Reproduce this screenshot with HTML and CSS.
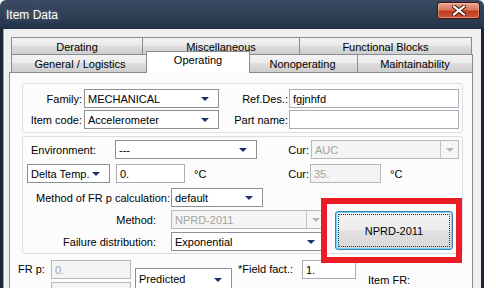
FILE: index.html
```html
<!DOCTYPE html>
<html>
<head>
<meta charset="utf-8">
<link rel="stylesheet" href="styles.css">
</head>
<body>
<div class="window">
  <div class="titlebar">
    <span class="title">Item Data</span>
    <div class="close">
      <svg width="14" height="11" viewBox="0 0 14 11"><path d="M2 1.5 L12 9.5 M12 1.5 L2 9.5" stroke="#3a0f08" stroke-width="4" stroke-linecap="square"/><path d="M2 1.5 L12 9.5 M12 1.5 L2 9.5" stroke="#fff" stroke-width="2.2" stroke-linecap="square"/></svg>
    </div>
  </div>
  <div class="client">
    <div class="tabs">
      <div class="tabrow back">
        <div class="tab t-der">Derating</div>
        <div class="tab t-misc">Miscellaneous</div>
        <div class="tab t-fb">Functional Blocks</div>
      </div>
      <div class="tabrow front">
        <div class="tab t-gen">General / Logistics</div>
        <div class="tab t-op sel">Operating</div>
        <div class="tab t-non">Nonoperating</div>
        <div class="tab t-mt">Maintainability</div>
      </div>
    </div>
    <div class="pane">
      <div class="group g1">
        <div class="row">
          <span class="lbl l-fam">Family:</span>
          <div class="combo c-fam"><span>MECHANICAL</span><i class="arr"></i></div>
          <span class="lbl l-ref">Ref.Des.:</span>
          <div class="field f-ref">fgjnhfd</div>
        </div>
        <div class="row">
          <span class="lbl l-fam">Item code:</span>
          <div class="combo c-fam"><span>Accelerometer</span><i class="arr"></i></div>
          <span class="lbl l-ref">Part name:</span>
          <div class="field f-ref"></div>
        </div>
      </div>
      <div class="group g2">
        <div class="row">
          <span class="lbl l-env">Environment:</span>
          <div class="combo c-env"><span>---</span><i class="arr"></i></div>
          <span class="lbl l-cur">Cur:</span>
          <div class="combo dis c-cur"><span>AUC</span><b class="dbtn"><i class="darr"></i></b></div>
        </div>
        <div class="row r2">
          <div class="combo c-dt"><span>Delta Temp.</span><i class="arr"></i></div>
          <div class="field f-dt">0.</div>
          <span class="unit u1">°C</span>
          <span class="lbl l-cur2">Cur:</span>
          <div class="field dis f-cur">35.</div>
          <span class="unit u2">°C</span>
        </div>
        <div class="row r3">
          <span class="lbl l-meth">Method of FR p calculation:</span>
          <div class="combo c-def"><span>default</span><i class="arr"></i></div>
        </div>
        <div class="lower">
          <div class="lcol">
            <div class="row">
              <span class="lbl l-m2">Method:</span>
              <div class="combo dis c-m"><span>NPRD-2011</span><b class="dbtn"><i class="darr"></i></b></div>
            </div>
            <div class="row">
              <span class="lbl l-m2">Failure distribution:</span>
              <div class="combo c-m"><span>Exponential</span><i class="arr"></i></div>
            </div>
          </div>
          <div class="btn"><span class="focus">NPRD-2011</span></div>
        </div>
      </div>
      <div class="bottom">
        <span class="lbl l-frp">FR p:</span>
        <div class="stack">
          <div class="field dis f-frp">0.</div>
          <div class="field dis f-frp"></div>
        </div>
        <div class="combo c-pred"><span>Predicted</span><i class="arr"></i></div>
        <span class="lbl l-ff">*Field fact.:</span>
        <div class="field f-ff">1.</div>
        <span class="lbl l-ifr">Item FR:</span>
      </div>
    </div>
  </div>
</div>
<div class="annot"></div>
</body>
</html>
```
FILE: styles.css
```css
* { box-sizing: border-box; }
html, body { margin: 0; padding: 0; }
body {
  width: 496px; height: 288px; overflow: hidden; position: relative;
  background: #fff;
  font-family: "Liberation Sans", Arial, sans-serif; font-size: 11px; color: #000;
}
.window {
  width: 484px; height: 288px;
  display: flex; flex-direction: column;
  background: linear-gradient(to bottom, #3a4b63 0, #24344a 28px, #1b2535 29px, #1b2535 100%);
  border-radius: 6px 6px 0 0;
  padding: 0 3px;
}
.titlebar {
  height: 29px; flex: none;
  display: flex; justify-content: space-between; align-items: flex-start;
  padding-left: 3px;
}
.title {
  color: #fff; font-size: 12px; margin-top: 8px;
  text-shadow: 0 0 5px rgba(255,255,255,0.35);
}
.close {
  width: 43px; height: 17px; margin-top: 2px; margin-right: 1px;
  border: 1px solid #45140c; border-radius: 3px;
  background: linear-gradient(to bottom, #e9a590 0, #d9765c 45%, #c13d22 55%, #c8553a 100%);
  box-shadow: inset 0 0 0 1px rgba(255,210,190,0.45);
  display: flex; align-items: center; justify-content: center;
}
.client {
  flex: 1; min-height: 0;
  background: #f0f0f0;
  border-left: 1px solid #9aa3ad;
  padding: 8px 8px 0 5px;
  display: flex; flex-direction: column;
}
.tabs { height: 35px; flex: none; display: flex; flex-direction: column; }
.tabrow { display: flex; padding-left: 2px; }
.tabrow.back { height: 17px; }
.tabrow.front { height: 18px; align-items: flex-end; }
.tab {
  border: 1px solid #898c95; border-bottom: none;
  margin-right: -1px;
  background: linear-gradient(to bottom, #f3f3f3 0, #ebebeb 45%, #dddddd 50%, #cfcfcf 100%);
  display: flex; align-items: center; justify-content: center;
  height: 100%; padding-top: 1px;
}
.t-der { width: 132px; }
.t-misc { width: 158px; }
.t-fb { width: 173px; }
.t-gen { width: 138px; }
.t-op { width: 100px; }
.t-non { width: 111px; }
.t-mt { width: 116px; }
.tab.sel {
  height: 22px; margin: 0 -3px -1px -2px; width: 104px;
  background: #fff; position: relative; z-index: 1;
  align-items: flex-start; padding-top: 2px;
}
.pane {
  flex: 1; min-height: 0;
  border: 1px solid #898c95; border-bottom: none;
  background: #fcfcfc;
  padding: 10px 9px 0 12px;
}
.group {
  border: 1px solid #d5dfe5; border-radius: 3px;
  display: flex; flex-direction: column;
}
.g1 { padding: 5px 3px 3px 0; gap: 2px; }
.g2 { margin-top: 3px; padding: 3px 3px 2px 4px; }
.row { display: flex; align-items: center; height: 19px; }
.lbl { text-align: right; white-space: nowrap; flex: none; }
.l-fam { width: 61px; padding-right: 2px; }
.l-ref { width: 70px; padding-right: 1px; }
.combo, .field {
  height: 19px; flex: none; position: relative;
  border: 1px solid #8e8f8f; background: #fff;
  display: flex; align-items: center; padding-left: 3px;
  white-space: nowrap; overflow: hidden;
}
.field { border-color: #abadb3; }
.combo .arr {
  position: absolute; right: 9px; top: 7px;
  width: 0; height: 0;
  border-left: 4px solid transparent; border-right: 4px solid transparent;
  border-top: 4px solid #1d2f6b;
}
.dis { background: #f4f4f4; color: #a3a3a3; border-color: #b8b8b8; }
.dbtn {
  position: absolute; right: 0; top: 0; bottom: 0; width: 18px;
  border-left: 1px solid #c4c4c4; background: #f6f6f6;
}
.darr {
  position: absolute; left: 5px; top: 7px;
  border-left: 4px solid transparent; border-right: 4px solid transparent;
  border-top: 4px solid #b4b4b4;
}
.c-fam { width: 135px; }
.f-ref { width: 170px; }
.l-env { width: 88px; text-align: left; padding-left: 4px; }
.c-env { width: 142px; }
.l-cur { width: 54px; padding-right: 2px; }
.c-cur { width: 148px; }
.r2 { margin-top: 5px; }
.c-dt { width: 83px; }
.f-dt { width: 69px; margin-left: 6px; }
.unit { flex: none; }
.u1 { width: 72px; padding-left: 9px; }
.l-cur2 { width: 53px; padding-right: 1px; }
.f-cur { width: 71px; }
.u2 { padding-left: 9px; }
.r3 { margin-top: 5px; }
.l-meth { width: 144px; padding-right: 1px; }
.c-def { width: 92px; }
.lower { display: flex; margin-top: 3px; }
.lcol { display: flex; flex-direction: column; gap: 3px; }
.l-m2 { width: 144px; padding-right: 15px; }
.c-m { width: 154px; }
.btn {
  width: 118px; height: 39px; margin: 1px 0 0 10px; flex: none;
  border: 1px solid #3c7fb1; border-radius: 3px;
  background: linear-gradient(to bottom, #f4f4f4 0, #ececec 48%, #e0e0e0 52%, #d8d8d8 100%);
  box-shadow: inset 0 0 0 1px #6fd8f7;
  padding: 2px;
  display: flex;
}
.btn .focus {
  flex: 1; border: 1px dotted #1a3a5a;
  display: flex; align-items: center; justify-content: center;
}
.bottom { display: flex; align-items: flex-start; margin: 6px 0 0 -4px; }
.l-frp { width: 33px; text-align: left; line-height: 19px; }
.stack { display: flex; flex-direction: column; gap: 3px; }
.f-frp { width: 80px; }
.c-pred { width: 97px; height: 22px; margin: 8px 0 0 4px; }
.c-pred .arr { top: 9px; }
.l-ff { margin-left: 6px; width: 64px; text-align: left; line-height: 19px; }
.f-ff { width: 54px; }
.l-ifr { margin: 11px 0 0 12px; text-align: left; line-height: 19px; }
.annot {
  position: absolute; left: 321px; top: 198px; width: 141px; height: 65px;
  border: 6px solid #ec1c24;
}
```
